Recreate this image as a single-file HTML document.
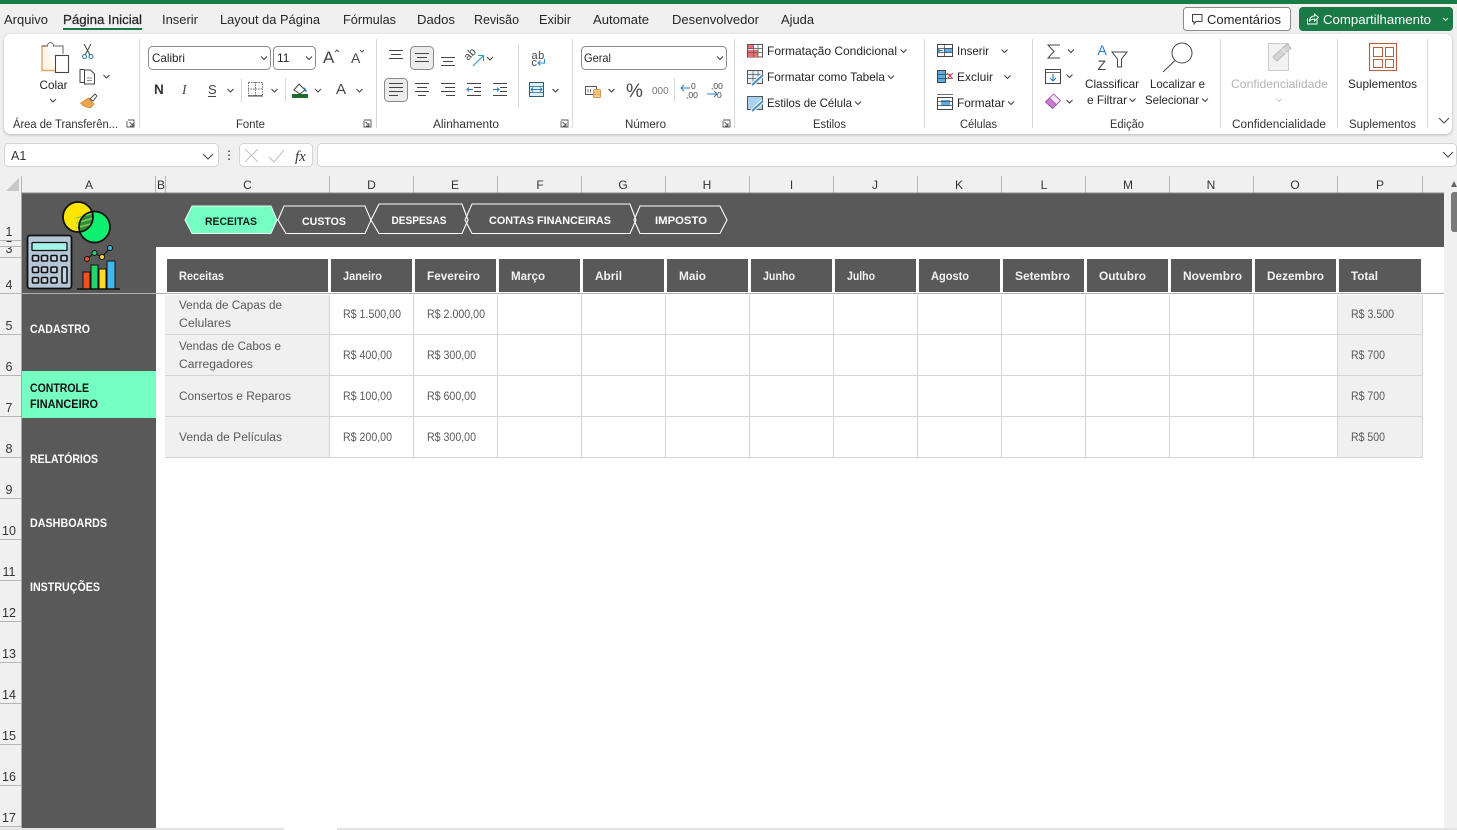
<!DOCTYPE html>
<html lang="pt-BR">
<head>
<meta charset="utf-8">
<title>Planilha</title>
<style>
html,body{margin:0;padding:0;width:1457px;height:830px;overflow:hidden;background:#f0f0f0}
svg{display:block;font-family:"Liberation Sans",sans-serif}
.m{font-size:12.5px;fill:#262626}
.g{font-size:11.5px;fill:#333}
.r{font-size:12px;fill:#262626}
.ch{font-size:12px;fill:#333;text-anchor:middle}
.rh{font-size:12.5px;fill:#333;text-anchor:middle}
.h{font-size:11.5px;font-weight:bold;fill:#f2f2f2}
.c{font-size:11.5px;fill:#595959}
.n{font-size:11.5px;fill:#595959}
.s{font-size:11.5px;font-weight:bold;fill:#fff}
.t{font-size:11px;font-weight:bold;fill:#fff;text-anchor:middle}
.i{fill:none;stroke:#444;stroke-width:1}
.sep{stroke:#d8d8d8;stroke-width:1}
.gl{stroke:#d4d4d4;stroke-width:1}
.hl{stroke:#b5b5b5;stroke-width:1}
</style>
</head>
<body>
<svg width="1457" height="830" viewBox="0 0 1457 830" xmlns="http://www.w3.org/2000/svg">
<defs>
<path id="cv" d="M0 0l3 3 3-3" fill="none" stroke="#444" stroke-width="1.1"/>
<filter id="sh" x="-2%" y="-10%" width="104%" height="125%"><feDropShadow dx="0" dy="1" stdDeviation="1.5" flood-color="#000" flood-opacity=".25"/></filter>
<clipPath id="yc"><circle cx="78" cy="217" r="15"/></clipPath>
<clipPath id="r3"><rect x="0" y="247" width="21" height="10"/></clipPath>
</defs>

<rect width="1457" height="830" fill="#f0f0f0"/>
<rect width="1457" height="4" fill="#1a7a46"/>

<!-- Menu -->
<text class="m" x="4" y="24" textLength="44" lengthAdjust="spacingAndGlyphs">Arquivo</text>
<text class="m" x="63" y="24" textLength="79" lengthAdjust="spacingAndGlyphs" stroke="#262626" stroke-width=".25">Página Inicial</text>
<rect x="63" y="28" width="79" height="2" fill="#1a7a46"/>
<text class="m" x="162" y="24" textLength="36" lengthAdjust="spacingAndGlyphs">Inserir</text>
<text class="m" x="220" y="24" textLength="100" lengthAdjust="spacingAndGlyphs">Layout da Página</text>
<text class="m" x="343" y="24" textLength="53" lengthAdjust="spacingAndGlyphs">Fórmulas</text>
<text class="m" x="417" y="24" textLength="38" lengthAdjust="spacingAndGlyphs">Dados</text>
<text class="m" x="474" y="24" textLength="45" lengthAdjust="spacingAndGlyphs">Revisão</text>
<text class="m" x="539" y="24" textLength="32" lengthAdjust="spacingAndGlyphs">Exibir</text>
<text class="m" x="593" y="24" textLength="56" lengthAdjust="spacingAndGlyphs">Automate</text>
<text class="m" x="672" y="24" textLength="87" lengthAdjust="spacingAndGlyphs">Desenvolvedor</text>
<text class="m" x="781" y="24" textLength="33" lengthAdjust="spacingAndGlyphs">Ajuda</text>

<!-- Comments / share -->
<rect x="1183.5" y="7.5" width="107" height="23" rx="3" fill="#fff" stroke="#8a8a8a"/>
<path d="M1192.5 14.500h9.500v7h-6l-2 2.500v-2.500h-1.500z" class="i"/>
<text class="m" x="1207" y="24" textLength="74" lengthAdjust="spacingAndGlyphs">Comentários</text>
<rect x="1299" y="7" width="154" height="24" rx="4" fill="#1a7a46"/>
<path d="M1307.500 18v6h9.500v-6M1309.500 21c0-3 2-5 5-5v-2l4 3.500-4 3.500v-2c-2 0-3.500.5-5 2z" fill="none" stroke="#fff" stroke-width=".9"/>
<text class="m" style="fill:#fff" x="1323" y="24" textLength="108" lengthAdjust="spacingAndGlyphs">Compartilhamento</text>
<path d="M1443 18l2.500 2.500 2.500-2.500" fill="none" stroke="#fff"/>

<!-- Ribbon panel -->
<rect x="4" y="34" width="1448" height="100" rx="7" fill="#fff" filter="url(#sh)"/>
<line class="sep" x1="139.500" y1="39" x2="139.500" y2="128"/>
<line class="sep" x1="376.500" y1="39" x2="376.500" y2="128"/>
<line class="sep" x1="572.500" y1="39" x2="572.500" y2="128"/>
<line class="sep" x1="734.500" y1="39" x2="734.500" y2="128"/>
<line class="sep" x1="924.500" y1="39" x2="924.500" y2="128"/>
<line class="sep" x1="1032.500" y1="39" x2="1032.500" y2="128"/>
<line class="sep" x1="1220.500" y1="39" x2="1220.500" y2="128"/>
<line class="sep" x1="1337.500" y1="39" x2="1337.500" y2="128"/>
<line class="sep" x1="1427.500" y1="39" x2="1427.500" y2="128"/>
<line class="sep" x1="241.500" y1="79" x2="241.500" y2="102"/>
<line class="sep" x1="285.500" y1="78" x2="285.500" y2="102"/>
<line class="sep" x1="518.500" y1="44" x2="518.500" y2="108"/>
<line class="sep" x1="674.500" y1="78" x2="674.500" y2="102"/>

<!-- Clipboard -->
<path d="M47 46h-5v24.500h13" fill="#fff6e8" stroke="#e2a95b" stroke-width="1.400"/>
<path d="M42 46h5.500c0-4.500 6-4.500 6 0h9.500v8" fill="none" stroke="#666"/>
<rect x="55.500" y="55.500" width="13" height="17" fill="#fff" stroke="#444" stroke-width="1.100"/>
<text class="r" x="39.500" y="89" textLength="28" lengthAdjust="spacingAndGlyphs">Colar</text>
<use href="#cv" x="50" y="99"/>
<path d="M84 44l6 11M91 44l-6 11" class="i"/>
<circle cx="84.500" cy="56.500" r="2" fill="none" stroke="#2b7cc0" stroke-width="1.100"/>
<circle cx="91" cy="56.500" r="2" fill="none" stroke="#2b7cc0" stroke-width="1.100"/>
<path d="M84.500 69.500h-4.500v13h4M84.500 70h6l4 4v10h-10z" class="i"/>
<path d="M87 78h5M87 80.500h5" stroke="#666" stroke-width=".8"/>
<use href="#cv" x="103.500" y="75"/>
<path d="M80.500 103l8-5 5.500 6-3 3.500c-4 .5-7.500-1-10.500-4.500z" fill="#e8a552" stroke="#c98429" stroke-width=".7"/>
<path d="M90 99l5-5 2 2-4 5z" fill="#fff" stroke="#444" stroke-width=".9"/>

<text class="g" x="13" y="128" textLength="105" lengthAdjust="spacingAndGlyphs">Área de Transferên...</text>
<path d="M128 120h6v7h-7v-6M129.500 122l3.500 3.500M133 123v3h-3" fill="none" stroke="#555" stroke-width=".9"/>

<!-- Font group -->
<rect x="148.500" y="46.500" width="122" height="23" rx="4" fill="#fff" stroke="#8a8a8a"/>
<text class="r" x="152" y="62" textLength="33" lengthAdjust="spacingAndGlyphs">Calibri</text>
<use href="#cv" x="261" y="56.500"/>
<rect x="273.500" y="46.500" width="42" height="23" rx="4" fill="#fff" stroke="#8a8a8a"/>
<text class="r" x="277" y="62">11</text>
<use href="#cv" x="306" y="56.500"/>
<text x="323" y="63" font-size="17" fill="#444">A</text>
<path d="M335 52l2-2 2 2" fill="none" stroke="#555"/>
<text x="351" y="63" font-size="14" fill="#444">A</text>
<path d="M360 50l2 2 2-2" fill="none" stroke="#555"/>
<text x="154" y="94" font-size="13.500" font-weight="bold" fill="#333">N</text>
<text x="182" y="94" font-size="13.500" font-style="italic" font-family="Liberation Serif" fill="#444">I</text>
<text x="208" y="94" font-size="13" fill="#444">S</text>
<line x1="208" y1="96.500" x2="216" y2="96.500" stroke="#444"/>
<use href="#cv" x="227.500" y="89"/>
<rect x="248.500" y="82.500" width="14" height="13" fill="none" stroke="#777" stroke-dasharray="1.500 1"/>
<path d="M248 89h15M255.500 82v14" stroke="#777" stroke-dasharray="1.500 1"/>
<line x1="248" y1="96" x2="263" y2="96" stroke="#444"/>
<use href="#cv" x="271.500" y="89"/>
<path d="M294 90l5-6 6 6-5 4z" fill="#fff" stroke="#444"/>
<path d="M303 88c2 0 3 2 3 4" fill="none" stroke="#2b7cc0" stroke-width="1.300"/>
<rect x="292" y="94" width="16" height="4" fill="#1f6b2d"/>
<use href="#cv" x="315" y="89"/>
<text x="336" y="94" font-size="15" fill="#444">A</text>
<use href="#cv" x="356.500" y="89"/>
<text class="g" x="236" y="128" textLength="29" lengthAdjust="spacingAndGlyphs">Fonte</text>
<path d="M364 120h7v7h-7v-6M365.500 122l3.500 3.500M369 123v3h-3" fill="none" stroke="#555" stroke-width=".9"/>

<!-- Alignment -->
<rect x="410.500" y="46.500" width="23" height="23" rx="4" fill="#ececec" stroke="#8a8a8a"/>
<rect x="384.500" y="78.500" width="23" height="23" rx="4" fill="#ececec" stroke="#8a8a8a"/>
<path d="M389 50.500h14M391 54.500h10M389 58.500h14" class="i"/>
<path d="M415 53.500h14M417 57.500h10M415 61.500h14" class="i"/>
<path d="M441 57.500h14M443 61.500h10M441 65.500h14" class="i"/>
<path d="M389 83.500h14M389 87.500h14M389 91.500h14M389 95.500h9" class="i"/>
<path d="M415 83.500h14M417 87.500h10M415 91.500h14M418 95.500h8" class="i"/>
<path d="M441 83.500h14M445 87.500h10M441 91.500h14M446 95.500h9" class="i"/>
<path d="M467 83.500h14M474 87.500h7M474 91.500h7M467 95.500h14" class="i"/>
<path d="M473 89.500h-6l2-2m-2 2l2 2" fill="none" stroke="#2b7cc0"/>
<path d="M493 83.500h14M500 87.500h7M500 91.500h7M493 95.500h14" class="i"/>
<path d="M493 89.500h6l-2-2m2 2l-2 2" fill="none" stroke="#2b7cc0"/>
<text x="0" y="0" font-size="11" fill="#444" transform="translate(468 61) rotate(-45)">ab</text>
<path d="M473 66l10-10M478 55.500h5.500v5.500" fill="none" stroke="#2b9cc0" stroke-width="1.100"/>
<use href="#cv" x="487" y="57"/>
<text x="531.500" y="59" font-size="11" fill="#444" letter-spacing=".5">ab</text>
<text x="531.500" y="66" font-size="11" fill="#444">c</text>
<path d="M544.500 59v4h-6.500m2.500-2.500l-2.500 2.500 2.500 2.500" fill="none" stroke="#2b8cc0" stroke-width="1.100"/>
<rect x="529.500" y="82.500" width="14" height="14" fill="#dff0f6" stroke="#2d5f6f"/>
<path d="M529 86.500h15M529 92.500h15" stroke="#2d5f6f" stroke-width=".8"/>
<path d="M531 89.500h11m-9-2l-2 2 2 2m7-4l2 2-2 2" fill="none" stroke="#2b7cc0" stroke-width=".9"/>
<use href="#cv" x="552.500" y="89"/>
<text class="g" x="433" y="128" textLength="66" lengthAdjust="spacingAndGlyphs">Alinhamento</text>
<path d="M561 120h7v7h-7v-6M562.500 122l3.500 3.500M566 123v3h-3" fill="none" stroke="#555" stroke-width=".9"/>

<!-- Number -->
<rect x="581.500" y="46.500" width="145" height="23" rx="4" fill="#fff" stroke="#8a8a8a"/>
<text class="r" x="584" y="62" textLength="27" lengthAdjust="spacingAndGlyphs">Geral</text>
<use href="#cv" x="717" y="56.500"/>
<rect x="585.500" y="86.500" width="11" height="8" fill="#fff" stroke="#555"/>
<path d="M588 89v3.500M590.500 89v3.500" stroke="#555" stroke-width=".8"/>
<rect x="593.500" y="89.500" width="7" height="8" rx="1" fill="#f6cf95" stroke="#c98429" stroke-width=".8"/>
<path d="M594 92h6M594 94.500h6" stroke="#c98429" stroke-width=".6"/>
<use href="#cv" x="608.500" y="89"/>
<text x="626" y="97" font-size="19" fill="#444">%</text>
<text x="652" y="94" font-size="10" fill="#777">000</text>
<path d="M681 88h9m-9 0l3-3m-3 3l3 3" fill="none" stroke="#2b7cc0"/>
<text x="691" y="89" font-size="8.500" fill="#444">0</text>
<text x="686" y="98" font-size="8.500" fill="#444">,00</text>
<text x="711" y="89" font-size="8.500" fill="#444">,00</text>
<path d="M707 94h10m0 0l-3-3m3 3l-3 3" fill="none" stroke="#2b7cc0"/>
<text x="717" y="98" font-size="8.500" fill="#444">0</text>
<text class="g" x="625" y="128" textLength="41" lengthAdjust="spacingAndGlyphs">Número</text>
<path d="M723 120h7v7h-7v-6M724.500 122l3.500 3.500M728 123v3h-3" fill="none" stroke="#555" stroke-width=".9"/>

<!-- Styles -->
<rect x="747.500" y="44.500" width="15" height="12.500" fill="#fff" stroke="#555"/>
<rect x="748" y="45" width="5.500" height="4" fill="#f26d6d"/>
<rect x="748" y="50" width="10" height="7" fill="#f26d6d"/>
<path d="M747 48.500h16M747 52.500h16M753.500 44v13M758 44v13" stroke="#555" stroke-width=".7"/>
<text class="r" x="767" y="55" textLength="130" lengthAdjust="spacingAndGlyphs">Formatação Condicional</text>
<use href="#cv" x="900.500" y="49.500"/>
<rect x="747.500" y="70.500" width="15" height="13" fill="#e3f0fa" stroke="#555"/>
<path d="M747 74.500h16M747 78.500h16M753 70v14M758 70v14" stroke="#555" stroke-width=".7"/>
<path d="M752 85l11-10" stroke="#fff" stroke-width="4"/>
<path d="M752 85l11-10" stroke="#4a8fc9" stroke-width="2"/>
<text class="r" x="767" y="81" textLength="118" lengthAdjust="spacingAndGlyphs">Formatar como Tabela</text>
<use href="#cv" x="888" y="75.500"/>
<rect x="747.500" y="96.500" width="15" height="13" fill="#a9d2f0" stroke="#555"/>
<path d="M752 111l11-10" stroke="#fff" stroke-width="4"/>
<path d="M752 111l11-10" stroke="#4a8fc9" stroke-width="2"/>
<text class="r" x="767" y="107" textLength="85" lengthAdjust="spacingAndGlyphs">Estilos de Célula</text>
<use href="#cv" x="855" y="101.500"/>
<text class="g" x="813" y="128" textLength="33" lengthAdjust="spacingAndGlyphs">Estilos</text>

<!-- Cells -->
<rect x="937.500" y="44.500" width="15" height="12" fill="#fff" stroke="#444"/>
<rect x="944" y="48" width="8" height="5" fill="#5aaee8"/>
<path d="M937 48.500h16M937 52.500h16M944.500 44v13" stroke="#444" stroke-width=".7"/>
<path d="M943 50.500h-5m2-2l-2 2 2 2" fill="none" stroke="#2b7cc0"/>
<text class="r" x="957" y="55" textLength="32" lengthAdjust="spacingAndGlyphs">Inserir</text>
<use href="#cv" x="1001.500" y="49.500"/>
<rect x="937.500" y="70.500" width="8" height="12" fill="#5aaee8" stroke="#444"/>
<path d="M937 74.500h15M937 78.500h15" stroke="#444" stroke-width=".7"/>
<path d="M947 73l6 6M953 73l-6 6" stroke="#d9534f" stroke-width="1.200"/>
<text class="r" x="957" y="81" textLength="36" lengthAdjust="spacingAndGlyphs">Excluir</text>
<use href="#cv" x="1004.500" y="75.500"/>
<rect x="937.500" y="97.500" width="15" height="12" fill="#fff" stroke="#444"/>
<rect x="941" y="100" width="9" height="6" fill="#5aaee8"/>
<path d="M937 94.500h16M937 101.500h16M937 105.500h16" stroke="#444" stroke-width=".7"/>
<text class="r" x="957" y="107" textLength="48" lengthAdjust="spacingAndGlyphs">Formatar</text>
<use href="#cv" x="1008" y="101.500"/>
<text class="g" x="960" y="128" textLength="37" lengthAdjust="spacingAndGlyphs">Células</text>

<!-- Editing -->
<path d="M1060 45h-12l6 6.500-6 6.500h12" class="i"/>
<use href="#cv" x="1068" y="49.500"/>
<rect x="1045.500" y="69.500" width="15" height="14" fill="#fff" stroke="#444"/>
<path d="M1045 72.500h16" stroke="#444" stroke-width=".8"/>
<path d="M1053 74v7m-3-3l3 3 3-3" fill="none" stroke="#2b7cc0" stroke-width="1.100"/>
<use href="#cv" x="1066.500" y="74.500"/>
<path d="M1045.500 102l8-8 7 6.500-8 8z" fill="#f7e6f9" stroke="#8f3f9c" stroke-width=".8"/>
<path d="M1045.500 102l4-4 7 6.500-4 4z" fill="#c77cd1" stroke="#8f3f9c" stroke-width=".6"/>
<use href="#cv" x="1066.500" y="100"/>
<text x="1097.500" y="55" font-size="14" fill="#2b7cc0">A</text>
<text x="1097.500" y="70" font-size="14" fill="#444">Z</text>
<path d="M1112 52h15l-5.500 7v8h-4v-8z" fill="none" stroke="#444"/>
<text class="r" x="1085" y="88" textLength="54" lengthAdjust="spacingAndGlyphs">Classificar</text>
<text class="r" x="1087" y="104" textLength="40" lengthAdjust="spacingAndGlyphs">e Filtrar</text>
<use href="#cv" x="1129.500" y="98.500"/>
<circle cx="1182" cy="53" r="10" fill="none" stroke="#444"/>
<path d="M1175 60.500l-12 11.500" stroke="#444"/>
<text class="r" x="1150" y="88" textLength="55" lengthAdjust="spacingAndGlyphs">Localizar e</text>
<text class="r" x="1145" y="104" textLength="54" lengthAdjust="spacingAndGlyphs">Selecionar</text>
<use href="#cv" x="1202" y="98.500"/>
<text class="g" x="1110" y="128" textLength="34" lengthAdjust="spacingAndGlyphs">Edição</text>

<!-- Confidentiality -->
<path d="M1268.500 43.500h20v27h-20z" fill="#f2f2f2" stroke="#ccc"/>
<path d="M1273 57l14-13 4 4-14 13z" fill="#d5d5d5" stroke="#bbb"/>
<path d="M1282 49l5 5" stroke="#f2f2f2"/>
<text class="r" style="fill:#b4b4b4" x="1231" y="88" textLength="97" lengthAdjust="spacingAndGlyphs">Confidencialidade</text>
<path d="M1276 98.500l3 3 3-3" fill="none" stroke="#ccc"/>
<text class="g" x="1232" y="128" textLength="94" lengthAdjust="spacingAndGlyphs">Confidencialidade</text>

<!-- Add-ins -->
<rect x="1369.500" y="43.500" width="27" height="27" fill="none" stroke="#b5613a" stroke-width="1.100"/>
<path d="M1373.500 47.500h9v9h-9zM1385.500 47.500h8v9h-8zM1373.500 59.500h9v8h-9zM1385.500 59.500h8v8h-8z" fill="none" stroke="#b5613a"/>
<text class="r" x="1348" y="88" textLength="69" lengthAdjust="spacingAndGlyphs">Suplementos</text>
<text class="g" x="1349" y="128" textLength="67" lengthAdjust="spacingAndGlyphs">Suplementos</text>
<path d="M1439 118l5 5 5-5" fill="none" stroke="#444"/>

<!-- Formula bar -->
<rect x="4.500" y="143.500" width="214" height="23" rx="4" fill="#fff" stroke="#d4d4d4"/>
<text x="11" y="160" font-size="12.500" fill="#333">A1</text>
<path d="M203 154l5 5 5-5" fill="none" stroke="#444"/>
<path d="M229 150.500v1.500M229 154.500v1.500M229 158.500v1.500" stroke="#444" stroke-width="1.500"/>
<rect x="239.500" y="143.500" width="73" height="23" rx="4" fill="#fff" stroke="#d4d4d4"/>
<path d="M245 149l13 13M258 149l-13 13" stroke="#c4c4c4" stroke-width="1.100"/>
<path d="M269 157l5 5 10-12" fill="none" stroke="#c4c4c4" stroke-width="1.100"/>
<text x="295" y="161" font-size="15" font-style="italic" font-family="Liberation Serif" fill="#333">fx</text>
<rect x="317.500" y="143.500" width="1139" height="23" rx="4" fill="#fff" stroke="#d4d4d4"/>
<path d="M1443 152l5 5 5-5" fill="none" stroke="#444"/>

<!-- Sheet -->
<rect x="22" y="193" width="1422" height="635" fill="#fff"/>
<rect x="22" y="193" width="134" height="635" fill="#595959"/>
<rect x="22" y="193" width="1422" height="54" fill="#595959"/>
<rect x="22" y="371" width="134" height="47" fill="#75ffc3"/>

<!-- Corner + Column headers -->
<path d="M19 178v13h-13z" fill="#c8c8c8"/>
<text class="ch" x="89" y="189">A</text>
<text class="ch" x="161" y="189">B</text>
<text class="ch" x="247.500" y="189">C</text>
<text class="ch" x="371.500" y="189">D</text>
<text class="ch" x="455" y="189">E</text>
<text class="ch" x="540" y="189">F</text>
<text class="ch" x="623" y="189">G</text>
<text class="ch" x="707" y="189">H</text>
<text class="ch" x="791.500" y="189">I</text>
<text class="ch" x="875" y="189">J</text>
<text class="ch" x="959" y="189">K</text>
<text class="ch" x="1044" y="189">L</text>
<text class="ch" x="1128" y="189">M</text>
<text class="ch" x="1211" y="189">N</text>
<text class="ch" x="1295" y="189">O</text>
<text class="ch" x="1380" y="189">P</text>
<path class="hl" d="M21.500 176v17M155.500 176v17M165.500 176v17M329.500 176v17M413.500 176v17M497.500 176v17M581.500 176v17M665.500 176v17M749.500 176v17M833.500 176v17M917.500 176v17M1001.500 176v17M1085.500 176v17M1169.500 176v17M1253.500 176v17M1337.500 176v17M1422.500 176v17"/>
<line x1="21" y1="193" x2="1444" y2="193" stroke="#8c8c8c"/>

<!-- Row headers -->
<line x1="21.500" y1="193" x2="21.500" y2="828" stroke="#a8a8a8"/>
<text class="rh" x="9" y="236">1</text>
<path d="M6.500 241.500h5" stroke="#333"/>
<text class="rh" x="9" y="253" clip-path="url(#r3)">3</text>
<text class="rh" x="9" y="289">4</text>
<text class="rh" x="9" y="330">5</text>
<text class="rh" x="9" y="371">6</text>
<text class="rh" x="9" y="412">7</text>
<text class="rh" x="9" y="453">8</text>
<text class="rh" x="9" y="494">9</text>
<text class="rh" x="9" y="535">10</text>
<text class="rh" x="9" y="576">11</text>
<text class="rh" x="9" y="617">12</text>
<text class="rh" x="9" y="658">13</text>
<text class="rh" x="9" y="699">14</text>
<text class="rh" x="9" y="740">15</text>
<text class="rh" x="9" y="781">16</text>
<text class="rh" x="9" y="822">17</text>
<path class="hl" d="M0 240.500h21M0 246.500h21M0 257.500h21M0 293.500h21M0 334.500h21M0 375.500h21M0 416.500h21M0 457.500h21M0 498.500h21M0 539.500h21M0 580.500h21M0 621.500h21M0 662.500h21M0 703.500h21M0 744.500h21M0 785.500h21M0 826.500h21"/>

<!-- Logo -->
<circle cx="78" cy="217" r="15" fill="#ffe600"/>
<circle cx="94.500" cy="227" r="15.500" fill="#10f070"/>
<g clip-path="url(#yc)">
<circle cx="94.500" cy="227" r="15.500" fill="#2f8f3f"/>
<path d="M76 218l18-5M76 223l18-5M76 228l18-5M76 233l18-5" stroke="#8fd14f" stroke-width="1.400"/>
</g>
<circle cx="78" cy="217" r="15" fill="none" stroke="#111" stroke-width="1.800"/>
<circle cx="94.500" cy="227" r="15.500" fill="none" stroke="#111" stroke-width="1.800"/>
<rect x="27.500" y="235.500" width="44" height="53" rx="2.500" fill="#b5c7d6" stroke="#111" stroke-width="1.800"/>
<rect x="32" y="242.500" width="35" height="8" rx="1" fill="#a5f2e6" stroke="#111" stroke-width="1.300"/>
<g fill="#c7d6e2" stroke="#111" stroke-width="1.600">
<rect x="32.500" y="255.500" width="6" height="5.500" rx="1"/><rect x="41.500" y="255.500" width="6" height="5.500" rx="1"/><rect x="51" y="255.500" width="6" height="5.500" rx="1"/><rect x="61" y="255.500" width="6" height="5.500" rx="1"/>
<rect x="32.500" y="267" width="6" height="5.500" rx="1"/><rect x="41.500" y="267" width="6" height="5.500" rx="1"/><rect x="51" y="267" width="6" height="5.500" rx="1"/>
<rect x="32.500" y="277.500" width="6" height="5.500" rx="1"/><rect x="41.500" y="277.500" width="6" height="5.500" rx="1"/><rect x="51" y="277.500" width="6" height="5.500" rx="1"/>
<rect x="62" y="267" width="5" height="16" rx="1"/>
</g>
<rect x="83" y="272" width="7" height="17" fill="#f0501e" stroke="#111"/>
<rect x="91" y="265" width="7" height="24" fill="#22d66a" stroke="#111"/>
<rect x="99" y="269" width="7" height="20" fill="#ffd92b" stroke="#111"/>
<rect x="107" y="261" width="8" height="28" fill="#3fb8ee" stroke="#111"/>
<line x1="77" y1="289" x2="120" y2="289" stroke="#111" stroke-width="1.600"/>
<path d="M87 259l7-6 8 4 8-9" fill="none" stroke="#111"/>
<circle cx="87" cy="259" r="2.500" fill="#f0501e" stroke="#111"/>
<circle cx="94.500" cy="253" r="2.500" fill="#22d66a" stroke="#111"/>
<circle cx="102" cy="257" r="2.500" fill="#ffd92b" stroke="#111"/>
<circle cx="110" cy="248" r="2.500" fill="#3fb8ee" stroke="#111"/>

<!-- Sidebar labels -->
<text class="s" x="30" y="333" textLength="60" lengthAdjust="spacingAndGlyphs">CADASTRO</text>
<text class="s" style="fill:#111" x="30" y="392" textLength="59" lengthAdjust="spacingAndGlyphs">CONTROLE</text>
<text class="s" style="fill:#111" x="30" y="408" textLength="68" lengthAdjust="spacingAndGlyphs">FINANCEIRO</text>
<text class="s" x="30" y="463" textLength="68" lengthAdjust="spacingAndGlyphs">RELATÓRIOS</text>
<text class="s" x="30" y="527" textLength="77" lengthAdjust="spacingAndGlyphs">DASHBOARDS</text>
<text class="s" x="30" y="591" textLength="70" lengthAdjust="spacingAndGlyphs">INSTRUÇÕES</text>

<!-- Tabs -->
<path d="M185 220l7-14h79l6 14-6 13.500h-79z" fill="#75ffc3" stroke="#e8fff5" stroke-width="1"/>
<text class="t" style="fill:#0f1f18" x="231" y="225" textLength="52" lengthAdjust="spacingAndGlyphs">RECEITAS</text>
<g fill="none" stroke="#fff" stroke-width="1.100">
<path d="M278 220l6-14h81l6 14-6 13.500h-79z"/>
<path d="M371 220l8-16h83l6 16-6 13.500h-83z"/>
<path d="M465 220l7-16h158l6 16-6 13.500h-158z"/>
<path d="M634 220l6-14h80l7 14-7 13.500h-80z"/>
</g>
<text class="t" x="324" y="225" textLength="44" lengthAdjust="spacingAndGlyphs">CUSTOS</text>
<text class="t" x="419" y="224" textLength="55" lengthAdjust="spacingAndGlyphs">DESPESAS</text>
<text class="t" x="550" y="224" textLength="122" lengthAdjust="spacingAndGlyphs">CONTAS FINANCEIRAS</text>
<text class="t" x="681" y="224" textLength="52" lengthAdjust="spacingAndGlyphs">IMPOSTO</text>

<!-- Table header -->
<g fill="#595959">
<rect x="167" y="259" width="161" height="33"/><rect x="331" y="259" width="81" height="33"/><rect x="415" y="259" width="81" height="33"/><rect x="499" y="259" width="81" height="33"/><rect x="583" y="259" width="81" height="33"/><rect x="667" y="259" width="81" height="33"/><rect x="751" y="259" width="81" height="33"/><rect x="835" y="259" width="81" height="33"/><rect x="919" y="259" width="81" height="33"/><rect x="1003" y="259" width="81" height="33"/><rect x="1087" y="259" width="81" height="33"/><rect x="1171" y="259" width="81" height="33"/><rect x="1255" y="259" width="81" height="33"/><rect x="1339" y="259" width="82" height="33"/>
</g>
<text class="h" x="179" y="280" textLength="45" lengthAdjust="spacingAndGlyphs">Receitas</text>
<text class="h" x="343" y="280" textLength="39" lengthAdjust="spacingAndGlyphs">Janeiro</text>
<text class="h" x="427" y="280" textLength="53" lengthAdjust="spacingAndGlyphs">Fevereiro</text>
<text class="h" x="511" y="280" textLength="34" lengthAdjust="spacingAndGlyphs">Março</text>
<text class="h" x="595" y="280" textLength="27" lengthAdjust="spacingAndGlyphs">Abril</text>
<text class="h" x="679" y="280" textLength="27" lengthAdjust="spacingAndGlyphs">Maio</text>
<text class="h" x="763" y="280" textLength="32" lengthAdjust="spacingAndGlyphs">Junho</text>
<text class="h" x="847" y="280" textLength="28" lengthAdjust="spacingAndGlyphs">Julho</text>
<text class="h" x="931" y="280" textLength="38" lengthAdjust="spacingAndGlyphs">Agosto</text>
<text class="h" x="1015" y="280" textLength="55" lengthAdjust="spacingAndGlyphs">Setembro</text>
<text class="h" x="1099" y="280" textLength="47" lengthAdjust="spacingAndGlyphs">Outubro</text>
<text class="h" x="1183" y="280" textLength="59" lengthAdjust="spacingAndGlyphs">Novembro</text>
<text class="h" x="1267" y="280" textLength="57" lengthAdjust="spacingAndGlyphs">Dezembro</text>
<text class="h" x="1351" y="280" textLength="27" lengthAdjust="spacingAndGlyphs">Total</text>
<line x1="22" y1="293.500" x2="1444" y2="293.500" stroke="#b0b0b0"/>

<!-- Table body -->
<rect x="165" y="295" width="165" height="163" fill="#f0f0f0"/>
<rect x="1338" y="295" width="85" height="163" fill="#f0f0f0"/>
<path class="gl" d="M165 334.500h1258M165 375.500h1258M165 416.500h1258M165 457.500h1258"/>
<path class="gl" d="M329.500 295v163M413.500 295v163M497.500 295v163M581.500 295v163M665.500 295v163M749.500 295v163M833.500 295v163M917.500 295v163M1001.500 295v163M1085.500 295v163M1169.500 295v163M1253.500 295v163M1337.500 295v163M1422.500 295v163"/>
<text class="c" x="179" y="309" textLength="103" lengthAdjust="spacingAndGlyphs">Venda de Capas de</text>
<text class="c" x="179" y="327" textLength="52" lengthAdjust="spacingAndGlyphs">Celulares</text>
<text class="c" x="179" y="350" textLength="102" lengthAdjust="spacingAndGlyphs">Vendas de Cabos e</text>
<text class="c" x="179" y="368" textLength="74" lengthAdjust="spacingAndGlyphs">Carregadores</text>
<text class="c" x="179" y="400" textLength="112" lengthAdjust="spacingAndGlyphs">Consertos e Reparos</text>
<text class="c" x="179" y="441" textLength="103" lengthAdjust="spacingAndGlyphs">Venda de Películas</text>
<text class="n" x="343" y="318" textLength="58" lengthAdjust="spacingAndGlyphs">R$ 1.500,00</text>
<text class="n" x="427" y="318" textLength="58" lengthAdjust="spacingAndGlyphs">R$ 2.000,00</text>
<text class="n" x="343" y="359" textLength="49" lengthAdjust="spacingAndGlyphs">R$ 400,00</text>
<text class="n" x="427" y="359" textLength="49" lengthAdjust="spacingAndGlyphs">R$ 300,00</text>
<text class="n" x="343" y="400" textLength="49" lengthAdjust="spacingAndGlyphs">R$ 100,00</text>
<text class="n" x="427" y="400" textLength="49" lengthAdjust="spacingAndGlyphs">R$ 600,00</text>
<text class="n" x="343" y="441" textLength="49" lengthAdjust="spacingAndGlyphs">R$ 200,00</text>
<text class="n" x="427" y="441" textLength="49" lengthAdjust="spacingAndGlyphs">R$ 300,00</text>
<text class="n" x="1351" y="318" textLength="43" lengthAdjust="spacingAndGlyphs">R$ 3.500</text>
<text class="n" x="1351" y="359" textLength="34" lengthAdjust="spacingAndGlyphs">R$ 700</text>
<text class="n" x="1351" y="400" textLength="34" lengthAdjust="spacingAndGlyphs">R$ 700</text>
<text class="n" x="1351" y="441" textLength="34" lengthAdjust="spacingAndGlyphs">R$ 500</text>

<!-- Scrollbars -->
<rect x="1444" y="172" width="13" height="658" fill="#f0f0f0"/>
<path d="M1451 187l3-6 3 6z" fill="#666"/>
<rect x="1451" y="192" width="8" height="40" rx="3" fill="#7a7a7a"/>
<rect x="0" y="828" width="1457" height="2" fill="#e4e4e4"/>
<rect x="284" y="828" width="53" height="2" fill="#fff"/>
</svg>
</body>
</html>
